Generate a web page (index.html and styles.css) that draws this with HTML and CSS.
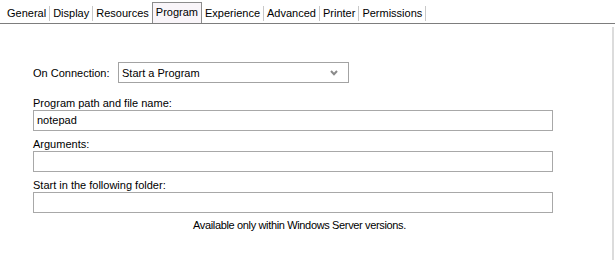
FILE: index.html
```html
<!DOCTYPE html>
<html>
<head>
<meta charset="utf-8">
<link rel="stylesheet" href="styles.css">
</head>
<body>
<div class="window">
  <div class="tabs">
    <span class="tab">General</span>
    <span class="tab">Display</span>
    <span class="tab">Resources</span>
    <span class="tab active">Program</span>
    <span class="tab">Experience</span>
    <span class="tab">Advanced</span>
    <span class="tab">Printer</span>
    <span class="tab">Permissions</span>
  </div>
  <div class="pane">
    <div class="form">
      <div class="conn-row">
        <span class="conn-label">On Connection:</span>
        <div class="select">
          <span>Start a Program</span>
          <svg class="chev" width="8" height="6" viewBox="0 0 8 6"><polyline points="1,1 4,4.2 7,1" fill="none" stroke="#8a8a8a" stroke-width="2"/></svg>
        </div>
      </div>
      <div class="field">
        <label class="lbl">Program path and file name:</label>
        <div class="input">notepad</div>
      </div>
      <div class="field">
        <label class="lbl">Arguments:</label>
        <div class="input"></div>
      </div>
      <div class="field">
        <label class="lbl">Start in the following folder:</label>
        <div class="input"></div>
      </div>
      <div class="note">Available only within Windows Server versions.</div>
    </div>
  </div>
</div>
</body>
</html>
```

FILE: styles.css
```css
html, body {
  margin: 0;
  padding: 0;
  background: #ffffff;
}
body {
  font-family: "Liberation Sans", Arial, sans-serif;
  font-size: 11px;
  color: #000;
  width: 615px;
  height: 260px;
  overflow: hidden;
}
.window {
  display: flex;
  flex-direction: column;
  height: 260px;
}
.tabs {
  display: flex;
  align-items: flex-end;
  height: 23px;
  padding-left: 4px;
  border-bottom: 1px solid #7d7d7d;
}
.tab {
  display: flex;
  align-items: center;
  height: 15px;
  margin-bottom: 2px;
  padding: 0 3px;
  border-right: 1px solid #c8c8c8;
  line-height: 13px;
}
.tab.active {
  height: 19px;
  margin-bottom: 0;
  margin-left: -1px;
  padding: 0 3px 1px 3px;
  border: 1px solid #8c8c8c;
  border-bottom: none;
  background: #f9f5f9;
}
.pane {
  flex: 1;
  margin-top: 3px;
  border-right: 2px solid #dcdcdc;
  width: 612px;
}
.form {
  width: 533px;
  padding-left: 33px;
  padding-top: 35px;
  display: flex;
  flex-direction: column;
}
.conn-row {
  display: flex;
  align-items: center;
  height: 21px;
}
.conn-label {
  width: 85px;
}
.select {
  width: 216px;
  height: 19px;
  border: 1px solid #a3a3a3;
  display: flex;
  align-items: center;
  justify-content: space-between;
  padding: 0 10px 0 3px;
  background: #fff;
}
.chev {
  display: block;
}
.field {
  display: flex;
  flex-direction: column;
  margin-top: 14px;
}
.field + .field {
  margin-top: 7px;
}
.lbl {
  line-height: 13px;
  height: 13px;
}
.input {
  width: 515px;
  height: 19px;
  border: 1px solid #a8a8a8;
  padding-left: 3px;
  line-height: 19px;
}
.note {
  margin-top: 6px;
  text-align: center;
  line-height: 13px;
  letter-spacing: -0.35px;
}
```
